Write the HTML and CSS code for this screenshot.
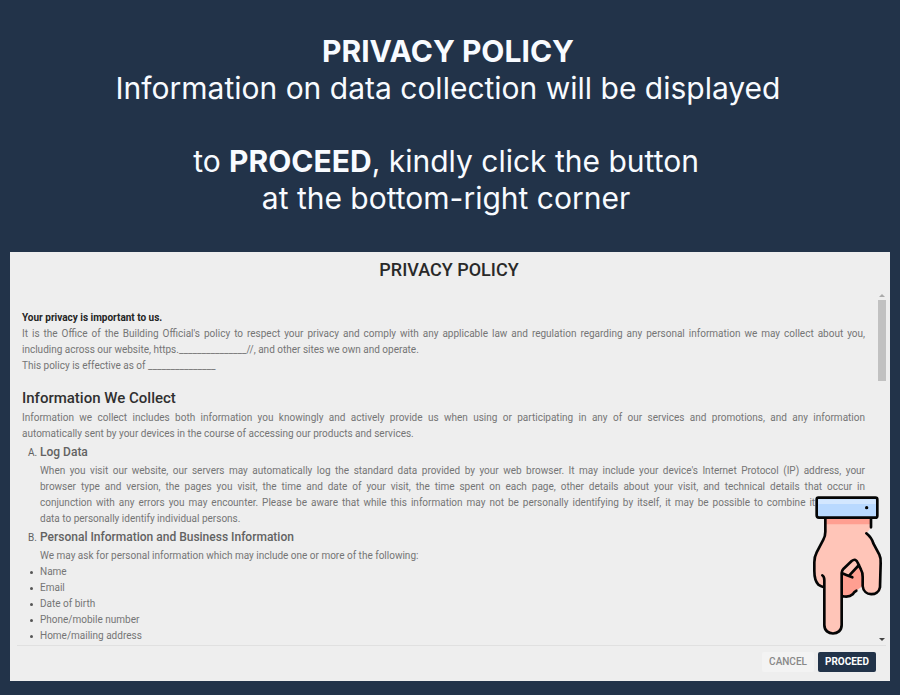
FILE: index.html
```html
<!DOCTYPE html>
<html lang="en">
<head>
<meta charset="utf-8">
<meta name="viewport" content="width=device-width, initial-scale=1">
<title>Privacy Policy</title>
<link rel="stylesheet" href="styles.css">
</head>
<body>
<header class="intro">
  <p><strong>PRIVACY POLICY</strong><br>Information on data collection will be displayed</p>
  <p class="hint">to <strong>PROCEED</strong>, kindly click the button<br>at the bottom-right corner</p>
</header>
<main class="panel">
  <h1>PRIVACY POLICY</h1>
  <div class="viewport">
    <div class="policy">
      <p class="lead">Your privacy is important to us.</p>
      <p><span class="full">It is the Office of the Building Official's policy to respect your privacy and comply with any applicable law and regulation regarding any personal information we may collect about you,</span> including across our website, https._______________//, and other sites we own and operate.</p>
      <p>This policy is effective as of _______________</p>
      <h2>Information We Collect</h2>
      <p><span class="full">Information we collect includes both information you knowingly and actively provide us when using or participating in any of our services and promotions, and any information</span> automatically sent by your devices in the course of accessing our products and services.</p>
      <section class="entry">
        <h3><span class="letter">A.</span>Log Data</h3>
        <p><span class="full">When you visit our website, our servers may automatically log the standard data provided by your web browser. It may include your device's Internet Protocol (IP) address, your</span> <span class="full">browser type and version, the pages you visit, the time and date of your visit, the time spent on each page, other details about your visit, and technical details that occur in</span> <span class="full">conjunction with any errors you may encounter. Please be aware that while this information may not be personally identifying by itself, it may be possible to combine it with other</span> data to personally identify individual persons.</p>
      </section>
      <section class="entry">
        <h3><span class="letter">B.</span>Personal Information and Business Information</h3>
        <p>We may ask for personal information which may include one or more of the following:</p>
        <ul>
          <li>Name</li>
          <li>Email</li>
          <li>Date of birth</li>
          <li>Phone/mobile number</li>
          <li>Home/mailing address</li>
        </ul>
      </section>
    </div>
    <div class="scrollbar" aria-hidden="true">
      <span class="arrow up"></span>
      <span class="thumb"></span>
      <span class="arrow down"></span>
    </div>
  </div>
  <footer class="actions">
    <button class="btn cancel" type="button">CANCEL</button>
    <button class="btn proceed" type="button">PROCEED</button>
  </footer>
  <svg class="hand" viewBox="36 30 216 426" aria-hidden="true">
    <g stroke="#050505" stroke-width="8" stroke-linecap="round" stroke-linejoin="round">
      <path fill="#ffc5b8" stroke="none" d="M76 98H213V128L199 145C212 152 219 165 223 178L242 222V310C242 334 189 336 187 303V262L163 224L125 264V424C125 455 72 455 72 424V304C52 300 42 278 43 240V212L74 158Z"/>
      <path fill="#ff9f91" stroke="none" d="M78 100H210V118H78ZM127 268L177 238L187 262V308L169 317C158 334 144 338 127 334Z"/>
      <path fill="#eee" stroke="none" d="M168 319L187 303L190 318L175 336H160Z"/>
      <path fill="#ffc5b8" stroke="none" d="M127 263L158 225Q168 222 173 235L177 241L151 272Z"/>
      <path fill="#b9d9ff" d="M55 38H226Q232 38 232 44V92Q232 98 226 98H57Q50 98 50 91V44Q50 38 55 38Z"/>
      <path fill="#d3e7ff" stroke="none" d="M55 43H227V57H55Z"/>
      <path fill="none" d="M76 100V140Q76 153 70 164L50 202Q43 215 43 232V258Q43 286 55 299Q62 304 72 307M67 271Q73 274 73 286V420C73 454 125 454 125 420V264M213 100V127M199 145Q215 158 220 175L238 209Q243 219 242 235L240 307C235 335 191 335 188 303V276Q188 262 183 254L174 235Q168 218 155 228L130 252Q125 257 125 264Q137 269 157 277M177 240L148 271M126 333Q147 338 158 328Q162 320 169 317"/>
      <circle cx="200" cy="68" r="5" fill="#050505" stroke="none"/>
    </g>
  </svg>
</main>
</body>
</html>
```
FILE: styles.css
```css
* { box-sizing: border-box; }

body {
  margin: 0;
  padding: 33px 10px 14px;
  background: #223349;
  color: #757575;
  font: 10px/16px Roboto, sans-serif;
}

h1, h2, h3, p, ul { margin: 0; }

.intro {
  padding: 0 4px 35px 0;
  color: #f8fbff;
  font: 30px/37px Inter, sans-serif;
  text-align: center;
}

.hint {
  margin-top: 36px;
  padding-right: 4px;
}

.panel {
  position: relative;
  background: #eee;
}

h1 {
  padding: 6px 2px 12px 0;
  color: #292929;
  font-size: 18px;
  font-weight: 500;
  line-height: 24px;
  text-align: center;
}

.viewport {
  display: flex;
  margin: 0 4px 0 7px;
  border-bottom: 1px solid #e0e0e0;
}

.policy {
  flex: 1;
  min-width: 0;
  padding: 16px 13px 0 5px;
  text-align: justify;
}

.full {
  display: block;
  text-align-last: justify;
}

.lead {
  color: #242424;
  font-weight: 700;
}

h2 {
  margin: 14px 0 2px;
  color: #303030;
  font-size: 15px;
  font-weight: 500;
  line-height: 20px;
}

.entry { padding-left: 18px; }

h3 {
  color: #626262;
  font-size: 12px;
  font-weight: 500;
  line-height: 20px;
}

.letter {
  display: inline-block;
  width: 12px;
  margin-left: -12px;
  font-size: 10px;
  font-weight: 400;
}

ul {
  padding: 0 0 1px;
  list-style: none;
}

li {
  display: flex;
  align-items: center;
}

li::before {
  content: "";
  width: 3px;
  height: 3px;
  margin: 0 7px 0 -10px;
  border-radius: 50%;
  background: #555;
}

.scrollbar {
  display: flex;
  flex-direction: column;
  align-items: center;
  width: 8px;
}

.thumb {
  width: 8px;
  height: 81px;
  margin: 3px 0 auto;
  background: #c1c1c1;
}

.arrow {
  border: 3px solid transparent;
  border-top: 0;
}

.up { border-bottom-color: #aaa; }

.down {
  margin-bottom: 4px;
  border-top: 3px solid #444;
  border-bottom: 0;
}

.actions {
  display: flex;
  justify-content: flex-end;
  gap: 4px;
  padding: 6px 14px 9px;
}

.btn {
  height: 20px;
  padding: 0 7px;
  border: 0;
  border-radius: 2px;
  font: 500 10px/20px Roboto, sans-serif;
}

.cancel {
  background: #f3f3f3;
  color: #888;
}

.proceed {
  background: #223349;
  color: #fff;
  font-weight: 700;
}

.hand {
  position: absolute;
  right: 6px;
  bottom: 44px;
  width: 72px;
  height: 142px;
}
```
